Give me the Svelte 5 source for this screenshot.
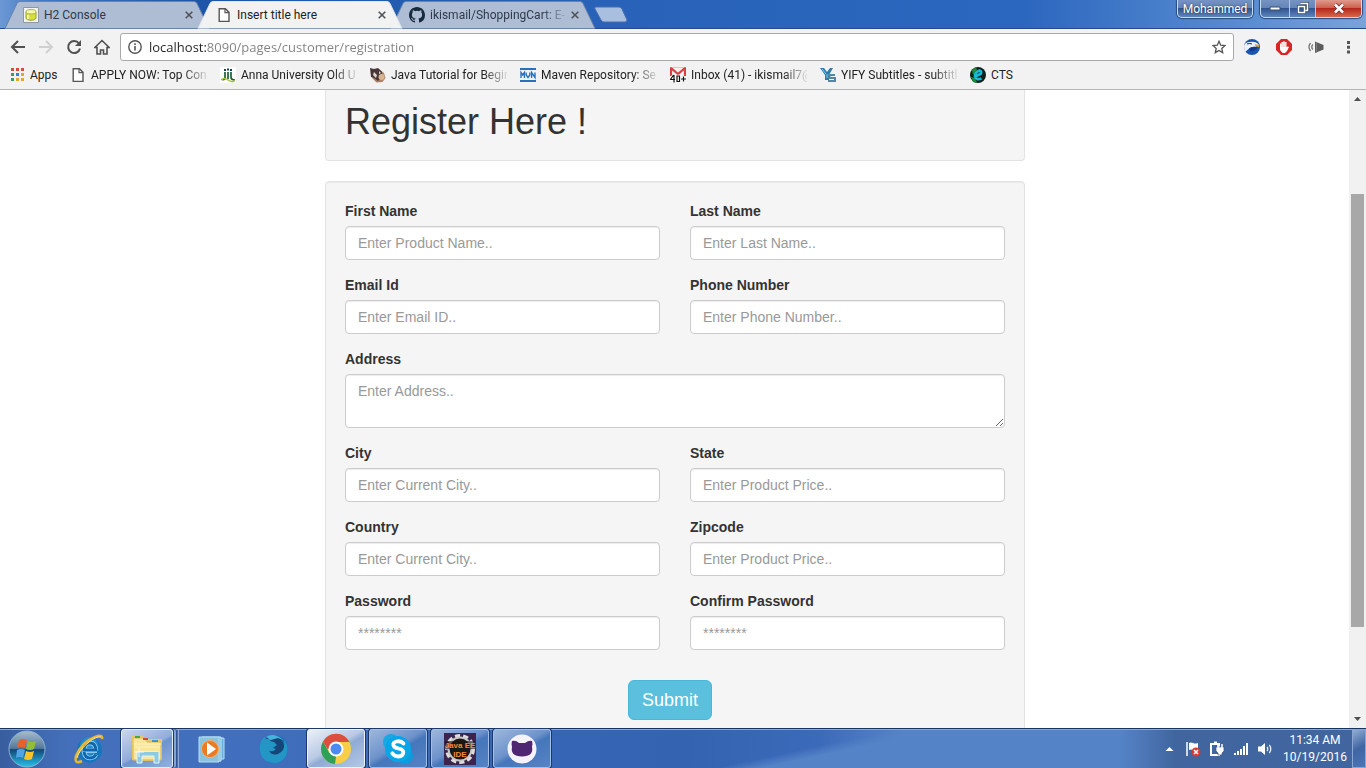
<script>
  const rows = [
    [
      { id: 'first', label: 'First Name', hint: 'Enter Product Name..' },
      { id: 'last', label: 'Last Name', hint: 'Enter Last Name..' },
    ],
    [
      { id: 'email', label: 'Email Id', hint: 'Enter Email ID..' },
      { id: 'phone', label: 'Phone Number', hint: 'Enter Phone Number..' },
    ],
    [{ id: 'address', label: 'Address', hint: 'Enter Address..', area: true }],
    [
      { id: 'city', label: 'City', hint: 'Enter Current City..' },
      { id: 'state', label: 'State', hint: 'Enter Product Price..' },
    ],
    [
      { id: 'country', label: 'Country', hint: 'Enter Current City..' },
      { id: 'zip', label: 'Zipcode', hint: 'Enter Product Price..' },
    ],
    [
      { id: 'password', label: 'Password', hint: '********', type: 'password' },
      { id: 'confirm', label: 'Confirm Password', hint: '********', type: 'password' },
    ],
  ];

  const tabs = [
    { title: 'H2 Console', icon: 'h2' },
    { title: 'Insert title here', icon: 'file', active: true },
    { title: 'ikismail/ShoppingCart: E-', icon: 'github', cut: true },
  ];

  const bookmarks = [
    { title: 'APPLY NOW: Top Con', icon: 'file', cut: true },
    { title: 'Anna University Old U', icon: 'anna', cut: true },
    { title: 'Java Tutorial for Begin', icon: 'java', cut: true },
    { title: 'Maven Repository: Se', icon: 'maven', cut: true },
    { title: 'Inbox (41) - ikismail7@', icon: 'gmail', cut: true },
    { title: 'YIFY Subtitles - subtitl', icon: 'yify', cut: true },
    { title: 'CTS', icon: 'cts' },
  ];

  const tasks = [
    { name: 'Internet Explorer', icon: 'ie' },
    { name: 'Windows Explorer', icon: 'explorer', state: 'stack' },
    { name: 'Media Player', icon: 'wmp' },
    { name: 'Firefox', icon: 'firefox' },
    { name: 'Chrome', icon: 'chrome', state: 'open bright' },
    { name: 'Skype', icon: 'skype', state: 'open' },
    { name: 'Eclipse Java EE', icon: 'eclipse', state: 'open' },
    { name: 'GitHub', icon: 'ghdesk', state: 'open' },
  ];
</script>

{#snippet small(icon)}
  <svg class="ico" viewBox="0 0 16 16" aria-hidden="true">
    {#if icon === 'file'}
      <path d="M3.2 1.7h6.2l3.6 3.7v9H3.2z" fill="#fff" stroke="#565656" stroke-width="1.4" />
      <path d="M9 1.7v4h4" fill="none" stroke="#565656" stroke-width="1.2" />
    {:else if icon === 'h2'}
      <path d="M.5.5h15v15H.5z" fill="#f1f3f5" stroke="#8f97a5" />
      <path d="M3 5v6c0 3 10 3 10 0V5z" fill="#d7e03a" stroke="#96a03b" />
      <ellipse cx="8" cy="4.8" rx="5" ry="2.2" fill="#f6f7b1" stroke="#abb24a" />
      <path d="M5 8v4" stroke="#fbfccd" stroke-width="1.5" />
    {:else if icon === 'github'}
      <path fill="#172b3c" d="M8 0C3.58 0 0 3.58 0 8c0 3.54 2.29 6.53 5.47 7.59.4.07.55-.17.55-.38 0-.19-.01-.82-.01-1.49-2.01.37-2.53-.49-2.69-.94-.09-.23-.48-.94-.82-1.13-.28-.15-.68-.52-.01-.53.63-.01 1.08.58 1.23.82.72 1.21 1.87.87 2.33.66.07-.52.28-.87.51-1.07-1.78-.2-3.64-.89-3.64-3.95 0-.87.31-1.59.82-2.15-.08-.2-.36-1.02.08-2.12 0 0 .67-.21 2.2.82a7.6 7.6 0 0 1 4 0c1.53-1.04 2.2-.82 2.2-.82.44 1.1.16 1.92.08 2.12.51.56.82 1.27.82 2.15 0 3.07-1.87 3.75-3.65 3.95.29.25.54.73.54 1.48 0 1.07-.01 1.93-.01 2.2 0 .21.15.46.55.38A8 8 0 0 0 16 8c0-4.42-3.58-8-8-8z" />
    {:else if icon === 'anna'}
      <path d="M0 0h16v16H0z" fill="#fff" />
      <path d="M5 5v6q0 2-2.500 1.600M8 5v7M11 5v5q0 3 4 3" fill="none" stroke="#1c6132" stroke-width="1.700" />
      <path d="M4 2h2v2H4zM7 1.500h2v2H7zM10 2h2v2h-2z" fill="#173e56" />
      <path d="M1 13q3-3 7 0t7 .5" fill="none" stroke="#a8c536" stroke-width="1.500" />
    {:else if icon === 'java'}
      <path d="M1 2l4 1 4-1 5 4 1.500 5-3 4-6 .5-4-4z" fill="#ae8266" />
      <path d="M0 1l4 1 4-1 4 4-1 6-3 3-4-3-3-1z" fill="#473737" />
      <path d="M4 5l3 3-1 3-3-3zM9 4l2 2-2 1z" fill="#e1d5cf" />
      <circle cx="11.500" cy="10" r="3" fill="#d9b491" />
    {:else if icon === 'maven'}
      <path d="M0 1h16v2H0zM0 13h16v2H0z" fill="#2672bd" />
      <path d="M1 11V5.500l1.700 2.500 1.700-2.500V11M6.200 5.500V8L8 10.500 9.800 8V5.500M11.600 11V5.500L15 10.500V5.500" fill="none" stroke="#2672bd" stroke-width="1.400" />
    {:else if icon === 'gmail'}
      <path d="M0 0h16v10H0z" fill="#f6f2f2" />
      <path d="M1 9V1l7 6 7-6v8" fill="none" stroke="#d64040" stroke-width="2.200" />
      <path d="M0 0h16" stroke="#e58c8c" />
      <path d="M3.500 8L.5 12.500H5M4 8v7.500M7 9h2.500v5.500H7zM11 12h5M13.500 9.500v5" fill="none" stroke="#fff" stroke-width="2.500" />
      <path d="M3.500 8L.5 12.500H5M4 8v7.500M7 9h2.500v5.500H7zM11 12h5M13.500 9.500v5" fill="none" stroke="#111" stroke-width="1.200" />
    {:else if icon === 'yify'}
      <path d="M0 1h4l3 4 3-4h3L9 8v5H5V8z" fill="#2d7cab" />
      <path d="M15 8H9.500v3H15v3H8" fill="none" stroke="#5687a0" stroke-width="2" />
      <path d="M2 2l4 5M7 7v4" stroke="#8cc7e5" />
    {:else if icon === 'cts'}
      <circle cx="8" cy="8" r="8" fill="#10201c" />
      <path d="M2 3l4-3 1 3-4 5zM1 10l4 1 2 5-4-1z" fill="#1c8c35" />
      <path d="M5 9.500L10.500 7q1.500-3-1-3.500Q5 5 5 9.500q1 4 6.500 2" fill="none" stroke="#18b9d5" stroke-width="2.800" />
    {/if}
  </svg>
{/snippet}

{#snippet big(icon)}
  <svg class="big" viewBox="0 0 32 32" aria-hidden="true">
    {#if icon === 'ie'}
      <circle cx="17.500" cy="17" r="12.500" fill="#1476bc" />
      <circle cx="17" cy="13" r="9" fill="#2c9ddd" opacity=".6" />
      <path d="M25 17.500H12q0-7.500 6-7.500 5.500 0 6 7.500M12 19q1 6 6 6 4 0 6-3.500" fill="none" stroke="#a5dcf7" stroke-width="4.500" />
      <path d="M25 17H12q0-7 6-7 5.500 0 6 7M12 19q1 6 6 6 4 0 6-3.500" fill="none" stroke="#1265ac" stroke-width="3" />
      <path d="M30 6Q31 1 23 4 10 9 4 23 2 32 10 28" fill="none" stroke="#e7b635" stroke-width="2.600" />
      <path d="M29 4Q24 3 17 9 7 17 5 25" fill="none" stroke="#ffe996" />
    {:else if icon === 'explorer'}
      <path d="M1 3h11l2 3h17v21q-15 2-30 0z" fill="#e7c968" />
      <path d="M2 5h12l2 4h14v18H2z" fill="#fae69a" stroke="#dcb557" />
      <path d="M4 3h5v2H4z" fill="#3fab42" /><path d="M12 5h5v2h-5z" fill="#d04a35" /><path d="M21 7h6v2h-6z" fill="#4691cf" />
      <path d="M3 11h27M4 14h25" stroke="#fff4bf" />
      <path d="M6 30V18.500h22V30h-5v-7H11v7z" fill="#8ecbe2" stroke="#d9f6ff" />
      <path d="M8 15v9M4 19h9" stroke="#fff" opacity=".8" />
    {:else if icon === 'wmp'}
      <path d="M8 5h20v21H8z" fill="#6daed9" stroke="#b7dff3" /><path d="M6 4h19v24H6z" fill="#76b8db" stroke="#c3e9f5" />
      <path d="M3 4h20v25H3z" fill="#8dc2dc" stroke="#b2dff2" />
      <circle cx="14" cy="16" r="8.500" fill="#e97b26" stroke="#f8b163" /><path d="M11 9.500v13l9-6.500z" fill="#fff" />
    {:else if icon === 'firefox'}
      <circle cx="16" cy="16" r="14" fill="#1776b5" />
      <path d="M8 5q8-5 16 2l3 8-5 9-10-1-5-7z" fill="#174579" />
      <path d="M3 8q-4 13 5 20 13 6 20-5 4-9-2-16 2 11-6 14-6 2-9-3 5 1 7-2l-3-1 4-3-3-3-4-1 2-3-5 1-3-2z" fill="#2496c6" />
      <path d="M8 4q8-5 17 3l-5-2-7 2z" fill="#45b3db" />
    {:else if icon === 'chrome'}
      <circle cx="16" cy="16" r="15" fill="#f7ce45" />
      <path d="M3 8.500L9.500 20 16 23.500 15 31A15 15 0 0 1 3 8.500z" fill="#2ea058" />
      <path d="M3 8.500A15 15 0 0 1 29.500 9H16v7H7.500z" fill="#dc4e40" />
      <circle cx="16" cy="16" r="7.500" fill="#fff" /><circle cx="16" cy="16" r="5.500" fill="#4c8af2" />
    {:else if icon === 'skype'}
      <circle cx="9" cy="9" r="8" fill="#18a8e4" /><circle cx="23" cy="23" r="8" fill="#0a9cdd" /><circle cx="16" cy="16" r="13" fill="#08a6e9" />
      <path d="M21.500 10.500Q19 7.500 14.500 8.500q-4 1-3 4 .5 2 5 3 5 1 4.800 4-.5 4-5 4-4 0-6-3.200" fill="none" stroke="#fff" stroke-width="3.800" stroke-linecap="round" />
    {:else if icon === 'eclipse'}
      <path d="M0 0h32v32H0z" fill="#3b244d" />
      <circle cx="16" cy="16" r="13" fill="none" stroke="#ddd" stroke-width="4" stroke-dasharray="5 3" />
      <circle cx="16" cy="16" r="11.500" fill="#1d1718" stroke="#c8c6c6" stroke-width="2" />
      <path d="M1 8h30v8H1z" fill="#1d1718" opacity=".6" />
      <text x="16" y="15" text-anchor="middle" class="eclipse">Java EE</text>
      <text x="16" y="24" text-anchor="middle" class="eclipse">IDE</text>
    {:else if icon === 'ghdesk'}
      <circle cx="16" cy="16" r="14.500" fill="#f5f3f9" />
      <path d="M6 8q4-1 7 2h6q4-3 7-2 1 3 0 6 2 9-10 9.500Q4 23 6 14q-1-3 0-6z" fill="#4f2672" />
    {/if}
  </svg>
{/snippet}

<div class="screen">
  <header class="strip">
    <div class="tabs">
      {#each tabs as tab}
        <div class="tab" class:active={tab.active}>
          <svg class="shape" viewBox="0 0 207 28" aria-hidden="true">
            <path d="M2 28L14 3q1-2 3-2h174q2 0 3 2l12 25" />
          </svg>
          {@render small(tab.icon)}
          <span class="title" class:fade={tab.cut}>{tab.title}</span>
          <button class="x" aria-label="Close tab">
            <svg viewBox="0 0 8 8" aria-hidden="true"><path d="M.7.7l6.600 6.600M7.300.7L.7 7.300" stroke="#4f5257" stroke-width="1.600" /></svg>
          </button>
        </div>
      {/each}
      <button class="newtab" aria-label="New tab">
        <svg viewBox="0 0 34 18" aria-hidden="true"><path d="M2 1h23q2 0 3 2l5 11q0 2-2 2H10q-2 0-3-2L1 3q-1-2 1-2z" fill="#a9bfe0" stroke="#4a6fae" /></svg>
      </button>
    </div>
    <div class="winbar">
      <button class="user">Mohammed</button>
      <div class="controls">
        <button aria-label="Minimize"><svg width="12" height="6" viewBox="0 0 12 6"><path d="M1 1h10v3H1z" fill="#fff" stroke="#3b4c6b" /></svg></button>
        <button aria-label="Restore"><svg width="12" height="13" viewBox="0 0 12 13"><path d="M3.500 1.500h7v7h-2M1.500 4.500h6v6h-6z" fill="none" stroke="#33486d" stroke-width="3" /><path d="M3.500 1.500h7v7h-2M1.500 4.500h6v6h-6z" fill="none" stroke="#fff" stroke-width="1.500" /></svg></button>
        <button class="close" aria-label="Close"><svg width="12" height="11" viewBox="0 0 12 11"><path d="M2 1.500l8 8M10 1.500l-8 8" stroke="#632e35" stroke-width="4" /><path d="M2 1.500l8 8M10 1.500l-8 8" stroke="#fff" stroke-width="2.500" /></svg></button>
      </div>
    </div>
  </header>

  <div class="toolbar">
    <button aria-label="Back"><svg class="nav" viewBox="0 0 16 16"><path d="M15 8H2M8 2L2 8l6 6" fill="none" stroke="#505050" stroke-width="2" /></svg></button>
    <button aria-label="Forward"><svg class="nav" viewBox="0 0 16 16"><path d="M1 8h13M8 2l6 6-6 6" fill="none" stroke="#d0d0d0" stroke-width="2" /></svg></button>
    <button aria-label="Reload"><svg class="nav" viewBox="0 0 16 16"><path d="M13 4.500A6 6 0 1 0 14 9.500" fill="none" stroke="#505050" stroke-width="2" /><path d="M15 1v6H9z" fill="#505050" /></svg></button>
    <button aria-label="Home"><svg class="nav" viewBox="0 0 16 16"><path d="M.8 8.500L8 1.500l7.200 7H13V15H9.500v-4h-3v4H3V8.500z" fill="none" stroke="#505050" stroke-width="1.600" /></svg></button>
    <div class="omnibox">
      <svg class="info" viewBox="0 0 14 14" aria-hidden="true"><circle cx="7" cy="7" r="6.200" fill="none" stroke="#555" stroke-width="1.400" /><path d="M7 6v4.500M7 3.300v1.600" stroke="#555" stroke-width="1.600" /></svg>
      <input class="url" aria-label="Address and search bar" value="localhost:8090/pages/customer/registration" />
      <svg class="star" viewBox="0 0 14 14" aria-hidden="true"><path d="M7 1.300l1.700 3.900 4.300.4-3.200 2.800.9 4.200L7 10.400l-3.700 2.200.9-4.200L1 5.600l4.300-.4z" fill="none" stroke="#555" stroke-width="1.300" /></svg>
    </div>
    <div class="extensions">
      <button aria-label="Eagle extension"><svg class="nav" viewBox="0 0 16 16"><circle cx="8" cy="8" r="8" fill="#1c55b1" /><path d="M0 7q1-4 6-4 6-1 9 3l-4 2-4 0-6 5q-1-3-1-6z" fill="#edf1fa" /><path d="M3 5q3-1 5 0M5 10q3-1 5-2l3 1q-3 3-6 3z" fill="#123b8c" stroke="#123b8c" /><path d="M11 5l4 1v2l-4-1z" fill="#e7aa34" /></svg></button>
      <button aria-label="AdBlock"><svg class="nav" viewBox="0 0 16 16"><path d="M5 0h6l5 5v6l-5 5H5l-5-5V5z" fill="#d92525" /><path d="M4 8V4.500h1.500V3H7v-.5h2V3h1.500v5L12 7.500l1 .5-2 4-2 2H6.500L4 11z" fill="#fff" /><path d="M6 4v4M8 3v5M10 4v4" stroke="#e69191" stroke-width=".6" /></svg></button>
      <button aria-label="Sound extension"><svg class="nav" viewBox="0 0 16 16"><path d="M7 2.500l8.500 3.500v4.500L7 14z" fill="#5d5d5d" /><path d="M8.500 3v11" stroke="#8b8b8b" stroke-width=".7" /><path d="M4.800 5.500q-2 2.500 0 5M2.500 4q-3 4 0 8" fill="none" stroke="#777" stroke-width="1.300" /></svg></button>
      <button aria-label="Menu"><svg class="nav" viewBox="0 0 16 16"><path d="M7 2h3v3H7zM7 6.700h3v3H7zM7 11.400h3v3H7z" fill="#555" /></svg></button>
    </div>
  </div>

  <nav class="bookmarks">
    <a href="#apps" class="bm">
      <svg class="ico" viewBox="0 0 16 16" aria-hidden="true">
        <path d="M2 1h3v3H2zM7 1h3v3H7zM12 1h3v3h-3z" fill="#d74b3e" /><path d="M2 6h3v3H2zM2 11h3v3H2z" fill="#3c9c58" />
        <path d="M7 6h3v3H7z" fill="#397ee0" /><path d="M12 6h3v3h-3zM7 11h3v3H7zM12 11h3v3h-3z" fill="#e0a92a" />
      </svg><span class="apps">Apps</span>
    </a>
    {#each bookmarks as b}
      <a href="#{b.icon}" class="bm">{@render small(b.icon)}<span class="label" class:fade={b.cut}>{b.title}</span></a>
    {/each}
  </nav>

  <div class="viewport">
    <main>
      <div class="container">
        <div class="well head"><h1>Register Here !</h1></div>
        <form class="well" onsubmit={(e) => e.preventDefault()}>
          {#each rows as row}
            <div class="row">
              {#each row as f}
                <div class="group">
                  <label for={f.id}>{f.label}</label>
                  {#if f.area}
                    <textarea id={f.id} rows="2" placeholder={f.hint}></textarea>
                  {:else}
                    <input id={f.id} type={f.type ?? 'text'} placeholder={f.hint} />
                  {/if}
                </div>
              {/each}
            </div>
          {/each}
          <div class="actions"><button class="submit">Submit</button></div>
        </form>
      </div>
    </main>
    <div class="scroll" aria-hidden="true">
      <svg viewBox="0 0 17 17"><path d="M5 11l3.500-4L12 11z" fill="#505050" /></svg>
      <div class="track"><div class="thumb"></div></div>
      <svg viewBox="0 0 17 17"><path d="M5 6l3.500 4L12 6z" fill="#505050" /></svg>
    </div>
  </div>

  <footer class="taskbar">
    <button class="start" aria-label="Start">
      <svg viewBox="0 0 38 38" aria-hidden="true">
        <defs>
          <linearGradient id="orb" x2="0" y2="1"><stop offset="0" stop-color="#a8bccd" /><stop offset=".48" stop-color="#55799b" /><stop offset=".52" stop-color="#134777" /><stop offset="1" stop-color="#27c3e9" /></linearGradient>
        </defs>
        <circle cx="19" cy="19" r="18" fill="url(#orb)" stroke="#8db1d2" />
        <path d="M11 10q4-2 8 0l-2 8q-4-2-8 0z" fill="#e8602b" /><path d="M20 11q4 2 8 0l-2 8q-4 2-8 0z" fill="#93bd38" />
        <path d="M9 20q4-2 8 0l-2 8q-4-2-7 0z" fill="#4fa5e4" /><path d="M18 21q4 2 8 0l-2 8q-4 2-8 0z" fill="#f7c42e" />
      </svg>
    </button>
    <div class="tasks">
      {#each tasks as t}
        <button class="task {t.state ?? ''}" aria-label={t.name}><span class="face">{@render big(t.icon)}</span></button>
      {/each}
    </div>
    <div class="tray">
      <svg width="9" height="16" viewBox="0 0 9 16" aria-hidden="true"><path d="M.5 10L4.500 6l4 4z" fill="#fff" /></svg>
      <svg width="16" height="16" viewBox="0 0 16 16" aria-hidden="true"><path d="M2 1v14" stroke="#fff" stroke-width="1.500" /><path d="M4 2q2-1 4 0t5 0v7q-3 1-5 0t-4 0z" fill="#fff" /><circle cx="11" cy="11" r="4.500" fill="#d93a32" /><path d="M9 9l4 4M13 9l-4 4" stroke="#fff" stroke-width="1.500" /></svg>
      <svg width="16" height="16" viewBox="0 0 16 16" aria-hidden="true"><path d="M2 3h8v11H2zM5 1.500h3" fill="none" stroke="#fff" stroke-width="2" /><path d="M7 6h8v4l-2 2v2H9v-2l-2-2z" fill="#fff" stroke="#3c5880" stroke-width=".7" /><path d="M9 3v4M13 3v4" stroke="#fff" stroke-width="1.500" /></svg>
      <svg width="16" height="16" viewBox="0 0 16 16" aria-hidden="true"><path d="M1 12h2v2H1zM4 10h2v4H4zM7 8h2v6H7zM10 5h2v9h-2zM13 2h2v12h-2z" fill="#fff" /></svg>
      <svg width="16" height="16" viewBox="0 0 16 16" aria-hidden="true"><path d="M1 5.500h3L8 2v12l-4-3.500H1z" fill="#fff" /><path d="M10 6q1.500 2 0 4M12.300 4q3 4 0 8" fill="none" stroke="#e5edf8" stroke-width="1.300" /></svg>
      <time class="clock"><span>11:34 AM</span><span>10/19/2016</span></time>
      <button class="desktop" aria-label="Show desktop"></button>
    </div>
  </footer>
</div>

<style>
  :global(body) { margin: 0; overflow: hidden; background: #fff; }
  * { box-sizing: border-box; }
  button { padding: 0; border: 0; background: none; font: inherit; display: flex; align-items: center; justify-content: center; }
  svg { display: block; flex: none; }

  .screen { display: flex; flex-direction: column; height: 100vh; font-family: Roboto, "Open Sans", sans-serif; font-size: 12px; color: #222; }

  .strip { display: flex; justify-content: space-between; height: 29px; flex: none; border-bottom: 1px solid #27478a; background: linear-gradient(90deg, #6c98d5 0, #4379c4 3%, #1d55a8 14%, #2863b9 45%, #2c67bf 75%, #5b8fd3 92%, #7aa3d9 100%); }
  .tabs { display: flex; padding-left: 3px; }
  .tab { position: relative; display: flex; align-items: center; width: 207px; height: 29px; padding: 1px 17px 0 20px; margin-right: -14px; gap: 5px; color: #2f3a4a; }
  .tab.active { z-index: 1; color: #222; }
  .shape { position: absolute; left: 0; top: 0; width: 100%; height: 29px; fill: #aebdd4; stroke: #6b83aa; }
  .active .shape { fill: #f2f2f2; stroke: #dde3ec; }
  .tab > :not(.shape) { position: relative; }
  .ico { width: 16px; height: 16px; }
  .title { flex: 1; white-space: nowrap; }
  .fade { overflow: hidden; white-space: nowrap; mask-image: linear-gradient(90deg, #000 calc(100% - 24px), rgba(0, 0, 0, .1)); }
  .x { width: 8px; height: 8px; }
  .x svg { width: 8px; height: 8px; }
  .newtab { width: 34px; height: 29px; margin-left: 12px; }
  .newtab svg { width: 34px; height: 18px; }

  .winbar { display: flex; align-items: flex-start; gap: 7px; padding-right: 4px; }
  .user, .controls { height: 18px; border: 1px solid #c9dbf2; border-top: 0; border-radius: 0 0 5px 5px; background: linear-gradient(#7594c3 0, #6685b8 45%, #31548f 50%, #5e85bd 100%); box-shadow: 0 0 1px 1px #284a80; }
  .user { width: 76px; color: #fff; text-shadow: 0 0 2px #1a2c4c; }
  .controls { display: flex; width: 102px; overflow: hidden; }
  .controls button { width: 29px; height: 17px; border-right: 1px solid #b4c9e5; }
  .controls button + button { width: 26px; }
  .controls .close { flex: 1; border: 0; background: linear-gradient(#df9a8c 0, #cd6250 45%, #b5271b 50%, #d7674a 100%); }

  .toolbar { display: flex; align-items: center; height: 35px; flex: none; padding: 1px 10px 0; gap: 12px; background: #f2f2f2; }
  .nav { width: 16px; height: 16px; }
  .omnibox { display: flex; align-items: center; gap: 7px; flex: 1; height: 28px; margin: 0 -2px; padding: 0 7px; border: 1px solid #a9a9a9; border-radius: 3px; background: #fff; }
  .extensions { display: flex; gap: 16px; }
  .info, .star { width: 14px; height: 14px; }
  .url { flex: 1; min-width: 0; height: 24px; padding: 0; border: 0; outline: 0; font: 13px "Open Sans", sans-serif; color: transparent; background: linear-gradient(90deg, #222 58px, #808080 58px); background-clip: text; -webkit-background-clip: text; }

  .bookmarks { display: flex; gap: 13px; height: 26px; flex: none; padding: 0 9px 4px; align-items: center; overflow: hidden; background: #f2f2f2; border-bottom: 1px solid #b6b4b6; }
  .bm { display: flex; align-items: center; gap: 5px; color: #222; text-decoration: none; }
  .apps { width: 27px; }
  .label { width: 116px; }

  .viewport { display: flex; flex: 1; min-height: 0; background: #fff; }
  main { flex: 1; overflow: hidden; padding-left: 1px; font: 14px/20px "Liberation Sans", Arial, sans-serif; color: #333; }
  .container { max-width: 700px; margin: 0 auto; }
  .well { margin: 0 0 20px; padding: 19px; border: 1px solid #e3e3e3; border-radius: 4px; background: #f5f5f5; box-shadow: inset 0 1px 1px rgba(0, 0, 0, .05); }
  .head { padding-top: 12px; padding-bottom: 18px; border-top: 0; border-radius: 0 0 4px 4px; box-shadow: none; }
  h1 { margin: 0; font-size: 36px; line-height: 40px; font-weight: 400; }
  .row { display: flex; gap: 30px; }
  .group { flex: 1; margin-bottom: 15px; }
  label { display: block; margin-bottom: 5px; font-weight: 700; }
  .group input, textarea { display: block; width: 100%; height: 34px; padding: 6px 12px; border: 1px solid #ccc; border-radius: 4px; background: #fff; color: #555; font: inherit; box-shadow: inset 0 1px 1px rgba(0, 0, 0, .075); }
  .group textarea { height: 54px; }
  ::placeholder { color: #999; opacity: 1; }
  .actions { display: flex; justify-content: center; padding: 15px 10px 40px 0; }
  .submit { height: 40px; padding: 0 13px; border: 1px solid #46b8da; border-radius: 6px; background: #5bc0de; color: #fff; font-size: 18px; }

  .scroll { display: flex; flex-direction: column; width: 17px; background: #f1f1f1; }
  .scroll svg { width: 17px; height: 17px; }
  .track { display: grid; grid-template-rows: 87fr 433fr 84fr; flex: 1; padding: 0 2px; }
  .thumb { grid-row: 2; background: #a8a8a8; }

  .taskbar { display: flex; height: 40px; flex: none; border-top: 1px solid #17335f; box-shadow: inset 0 1px #88a9dc; background: linear-gradient(90deg, transparent 82%, #41669f 86%), linear-gradient(168deg, transparent 58%, #5583c7 61%), linear-gradient(90deg, #385e9f 0, #4470bb 5%, #416fbe 18%, #3565b4 42%, #3363b1 50%, #3c6aba 60%, #5583c7 66%); }
  .start { width: 54px; }
  .start svg { width: 38px; height: 38px; }
  .tasks { display: flex; gap: 4px; padding-left: 5px; flex: 1; }
  .task { width: 58px; height: 39px; }
  .face { display: flex; align-items: center; justify-content: center; width: 100%; height: 100%; border-radius: 3px; }
  .big { width: 32px; height: 32px; }
  .open .face { border: 1px solid #a4bfe5; box-shadow: 0 0 0 1px #1d386a; background: linear-gradient(150deg, #9db7dc 0, #6d92cb 45%, #4676bb 55%, #5583c5 100%); }
  .bright .face { background: linear-gradient(150deg, #eaf0f8 0, #b9cae4 45%, #8fabd5 55%, #b5c9e6 100%); border-color: #eef3fa; }
  .stack { border-right: 1px solid #8dacd9; padding-right: 2px; }
  .stack .face { border: 1px solid #e4edf8; box-shadow: 0 0 0 1px #1d386a, 3px 0 #86a4d2, 4px 0 #2f5291; margin-right: 3px; background: linear-gradient(150deg, #cbd6eb 0, #8faeda 50%, #6d94cf 55%, #91b0dd 100%); }
  .eclipse { font: 700 8px "Liberation Sans", sans-serif; fill: #f58a30; }
  .tray { display: flex; align-items: center; gap: 8px; color: #fff; }
  .tray > svg:first-child { margin-right: 3px; margin-left: -3px; }
  .clock { display: flex; flex-direction: column; align-items: center; width: 60px; line-height: 17px; margin: 0 -1px 0 4px; }
  .desktop { width: 14px; height: 39px; border: 1px solid #8aa7d4; background: linear-gradient(150deg, #92add2, #3f65a3 50%, #4c76b6); }
</style>
